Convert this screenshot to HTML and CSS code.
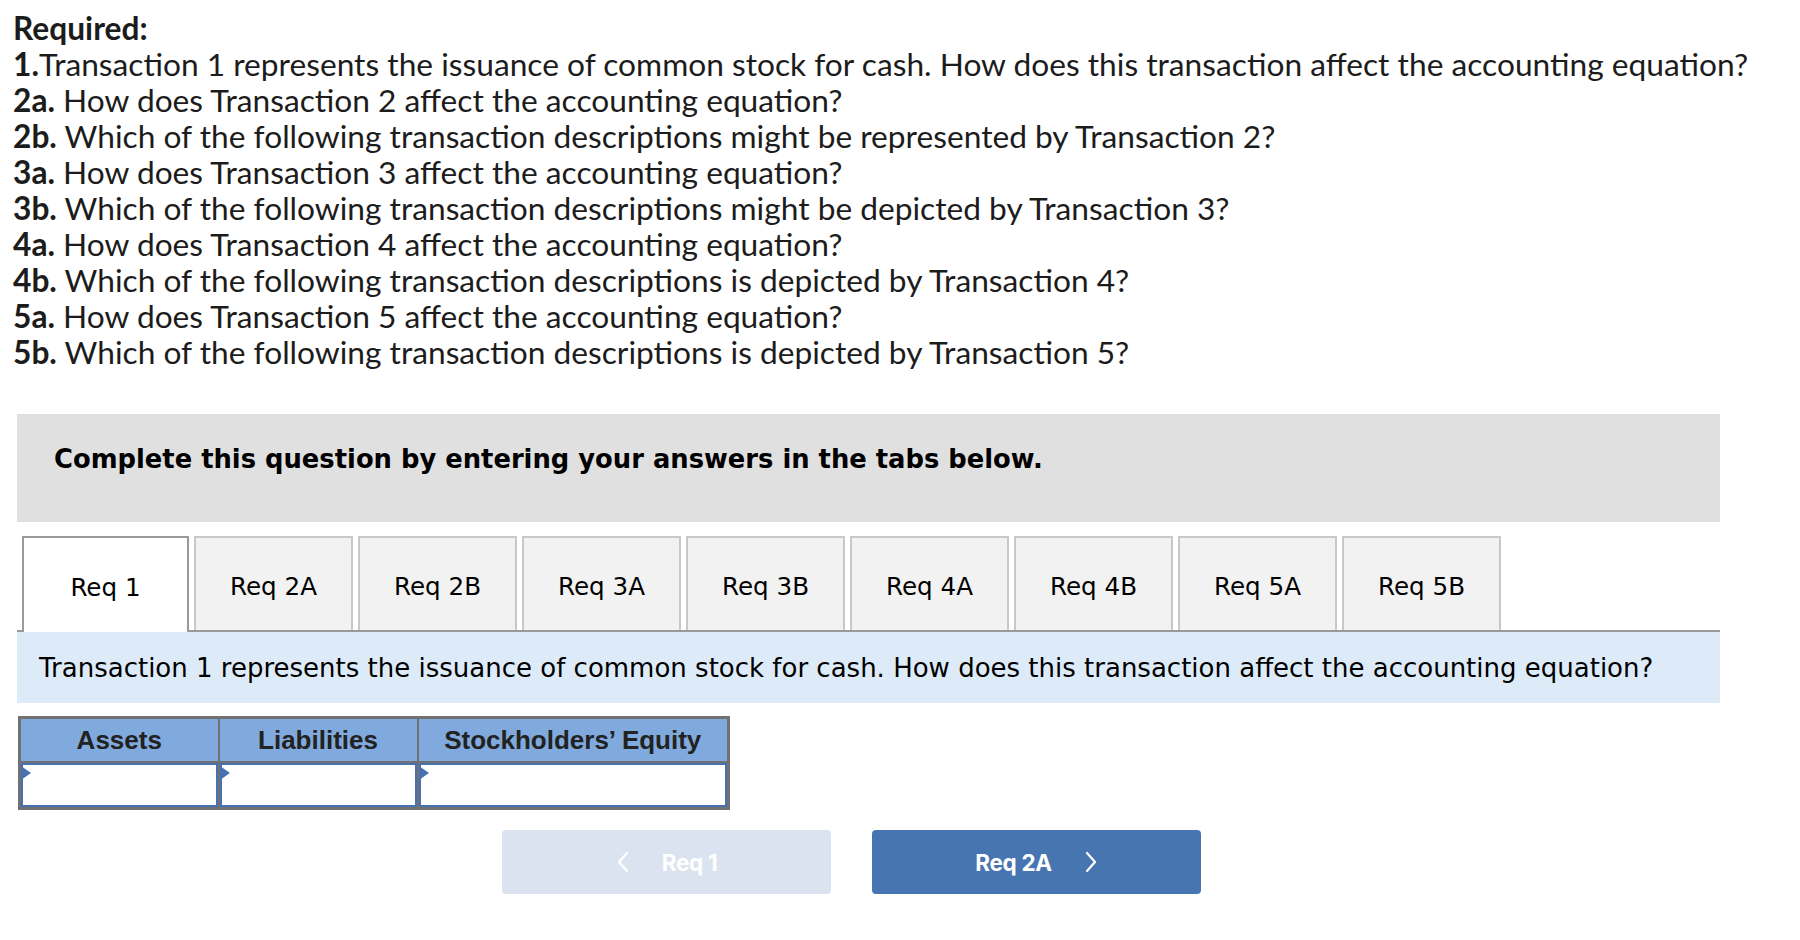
FILE: index.html
```html
<!DOCTYPE html>
<html lang="en">
<head>
<meta charset="utf-8">
<title>Required</title>
<link rel="stylesheet" href="styles.css">
</head>
<body>
<div class="page">
  <div class="required">
    <div class="req-line"><b>Required:</b></div>
    <div class="req-line"><b>1.</b>Transaction 1 represents the issuance of common stock for cash. How does this transaction affect the accounting equation?</div>
    <div class="req-line"><b>2a.</b> How does Transaction 2 affect the accounting equation?</div>
    <div class="req-line"><b>2b.</b> Which of the following transaction descriptions might be represented by Transaction 2?</div>
    <div class="req-line"><b>3a.</b> How does Transaction 3 affect the accounting equation?</div>
    <div class="req-line"><b>3b.</b> Which of the following transaction descriptions might be depicted by Transaction 3?</div>
    <div class="req-line"><b>4a.</b> How does Transaction 4 affect the accounting equation?</div>
    <div class="req-line"><b>4b.</b> Which of the following transaction descriptions is depicted by Transaction 4?</div>
    <div class="req-line"><b>5a.</b> How does Transaction 5 affect the accounting equation?</div>
    <div class="req-line"><b>5b.</b> Which of the following transaction descriptions is depicted by Transaction 5?</div>
  </div>

  <div class="block">
    <div class="instructions">Complete this question by entering your answers in the tabs below.</div>

    <div class="tabs">
      <div class="tab active">Req 1</div>
      <div class="tab">Req 2A</div>
      <div class="tab">Req 2B</div>
      <div class="tab">Req 3A</div>
      <div class="tab">Req 3B</div>
      <div class="tab">Req 4A</div>
      <div class="tab">Req 4B</div>
      <div class="tab">Req 5A</div>
      <div class="tab">Req 5B</div>
    </div>

    <div class="prompt">Transaction 1 represents the issuance of common stock for cash. How does this transaction affect the accounting equation?</div>

    <table class="equation">
      <colgroup>
        <col class="c1">
        <col class="c2">
        <col class="c3">
      </colgroup>
      <thead>
        <tr>
          <th>Assets</th>
          <th>Liabilities</th>
          <th>Stockholders’ Equity</th>
        </tr>
      </thead>
      <tbody>
        <tr>
          <td><div class="cell-input"></div></td>
          <td><div class="cell-input"></div></td>
          <td><div class="cell-input"></div></td>
        </tr>
      </tbody>
    </table>

    <div class="nav">
      <div class="btn prev">
        <svg class="chev" width="14" height="22" viewBox="0 0 14 22"><polyline points="11,2 3,11 11,20" fill="none" stroke="#ffffff" stroke-width="2.2" stroke-linecap="round" stroke-linejoin="round"/></svg>
        <span>Req 1</span>
      </div>
      <div class="btn next">
        <span>Req 2A</span>
        <svg class="chev" width="14" height="22" viewBox="0 0 14 22"><polyline points="3,2 11,11 3,20" fill="none" stroke="#ffffff" stroke-width="2.2" stroke-linecap="round" stroke-linejoin="round"/></svg>
      </div>
    </div>
  </div>
</div>
</body>
</html>
```

FILE: styles.css
```css
html, body {
  margin: 0;
  padding: 0;
  background: #ffffff;
}

.page {
  padding: 10px 0 0 0;
}

.required {
  padding-left: 13px;
  font-family: "Lato", "Liberation Sans", sans-serif;
  font-size: 31.7px;
  line-height: 36px;
  color: #1c1c1c;
}

.req-line b {
  font-weight: 700;
}

.block {
  margin-left: 17px;
  width: 1703px;
}

.instructions {
  margin-top: 44px;
  background: #e0e0e0;
  height: 108px;
  box-sizing: border-box;
  padding: 30px 0 0 37px;
  font-family: "DejaVu Sans", Verdana, sans-serif;
  font-weight: 700;
  font-size: 25.8px;
  line-height: 30px;
  color: #000;
}

.tabs {
  margin-top: 14px;
  display: flex;
  align-items: flex-end;
  border-bottom: 2px solid #9a9a9a;
  height: 94px;
  padding-left: 5px;
}

.tab {
  box-sizing: border-box;
  width: 159px;
  height: 94px;
  margin-right: 5px;
  background: #f2f2f2;
  border: 2px solid #c8c8c8;
  border-bottom: none;
  display: flex;
  align-items: center;
  justify-content: center;
  padding-top: 4px;
  font-family: "DejaVu Sans", Verdana, sans-serif;
  font-size: 24.6px;
  color: #000;
}

.tab.active {
  width: 167px;
  margin-right: 5px;
  height: 96px;
  margin-bottom: -2px;
  background: #ffffff;
  border-color: #9a9a9a;
}

.prompt {
  height: 71px;
  background: #ddebf8;
  display: flex;
  align-items: center;
  padding-left: 22px;
  font-family: "DejaVu Sans", Verdana, sans-serif;
  font-size: 26px;
  color: #000;
}

.equation {
  margin-top: 13px;
  margin-left: 1px;
  border-collapse: collapse;
  table-layout: fixed;
  width: 709px;
  border: 3px solid #717171;
}

.equation col.c1 { width: 199px; }
.equation col.c2 { width: 199px; }
.equation col.c3 { width: 311px; }

.equation th {
  background: #80aade;
  border: 2px solid #717171;
  height: 42px;
  padding: 0;
  font-family: "Liberation Sans", Arial, sans-serif;
  font-weight: 700;
  font-size: 26px;
  color: #222222;
  text-align: center;
  vertical-align: middle;
}

.equation td {
  border: 2px solid #717171;
  padding: 0;
  height: 44px;
  background: #ffffff;
}

.cell-input {
  position: relative;
  box-sizing: border-box;
  height: 44px;
  border: 2px solid #4672b4;
  background: #ffffff;
}

.cell-input::before {
  content: "";
  position: absolute;
  left: -2px;
  top: 1px;
  width: 0;
  height: 0;
  border-top: 7px solid transparent;
  border-bottom: 7px solid transparent;
  border-left: 10px solid #4672b4;
}

.nav {
  margin-top: 20px;
  display: flex;
  gap: 41px;
  padding-left: 485px;
}

.btn {
  box-sizing: border-box;
  width: 329px;
  height: 64px;
  border-radius: 4px;
  display: flex;
  align-items: center;
  justify-content: center;
  gap: 32px;
  font-family: "Inter", "Roboto", sans-serif;
  font-weight: 700;
  font-size: 22.5px;
  letter-spacing: -0.3px;
  color: #ffffff;
}

.btn.prev {
  background: #dae3ef;
}

.btn.next {
  background: #4775b2;
}

.chev {
  display: block;
}
```
